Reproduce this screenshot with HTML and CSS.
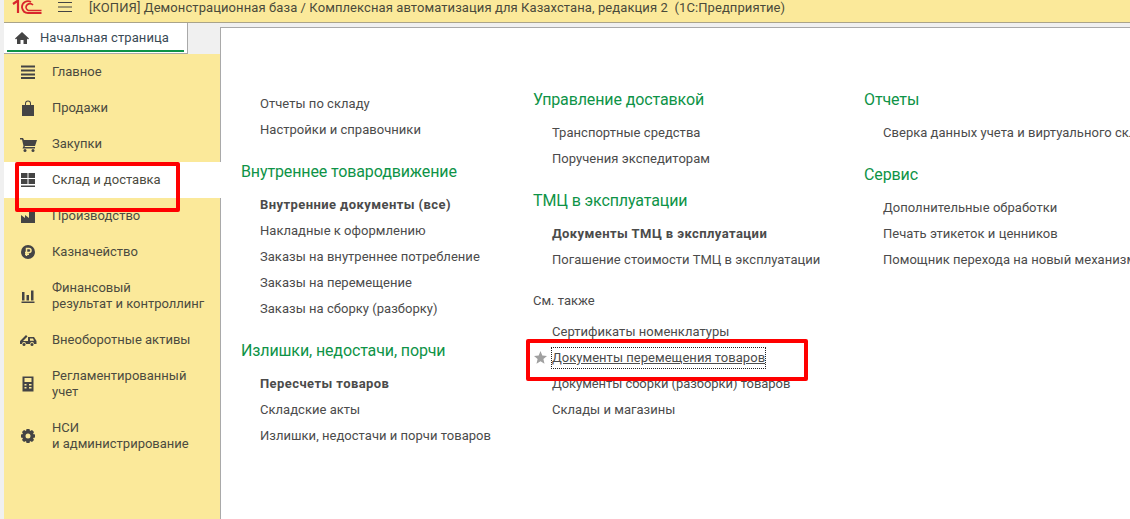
FILE: index.html
```html
<!DOCTYPE html>
<html lang="ru">
<head>
<meta charset="utf-8">
<title>1С:Предприятие</title>
<link rel="stylesheet" href="styles.css">
</head>
<body>
<header class="titlebar">
  <svg class="logo" width="30" height="15" viewBox="0 0 30 15"><g fill="none" stroke="#d8262c"><path stroke-width="2.200" d="M1 4 6 0.500V13"/><path stroke-width="1.800" d="M19 2A6 6 0 0 0 10 7.500Q11 13 16 13H29.500"/><path stroke-width="1.600" d="M21 5A4 4 0 0 0 14 7.500 3.500 3.500 0 0 0 18 10.500H29.500"/></g></svg>
  <svg class="burger" width="16" height="12" viewBox="0 0 16 12"><path d="M1 1.500H15M1 6H15M1 10.500H15" stroke="#444" stroke-width="1.200"/></svg>
  <span class="title">[КОПИЯ] Демонстрационная база / Комплексная автоматизация для Казахстана, редакция 2  (1С:Предприятие)</span>
</header>
<div class="main">
  <aside class="side">
    <div class="tab">
      <svg width="16" height="14" viewBox="0 0 16 14"><path fill="#444" d="M8 1 1 7.500 2 8.500 3 7.500V13H6.500V9H9.500V13H13V7.500L14 8.500 15 7.500Z"/></svg>
      <span class="tab-label">Начальная страница</span>
    </div>
    <nav class="nav">
      <a class="nav-item"><svg class="ico" viewBox="0 0 16 16"><path fill="#444" d="M1 1.500H15V3.500H1ZM1 5.500H15V7.500H1ZM1 9.500H15V11.500H1ZM1 13H15V15H1Z"/></svg><span>Главное</span></a>
      <a class="nav-item"><svg class="ico" viewBox="0 0 16 16"><path fill="#444" fill-rule="evenodd" d="M2 5H5V3.500A3 3 0 0 1 11 3.500V5H14V16H2ZM6 5H10V3.500A2 2 0 0 0 6 3.500Z"/></svg><span>Продажи</span></a>
      <a class="nav-item"><svg class="ico" viewBox="0 0 16 16"><path fill="#444" d="M0 2H3L4 4H17L15 10H5L4.500 11H15V12.500H2.500L3.500 10 2 3.500H0Z"/><circle cx="5" cy="14.500" r="1.500" fill="#444"/><circle cx="13" cy="14.500" r="1.500" fill="#444"/></svg><span>Закупки</span></a>
      <a class="nav-item active"><svg class="ico" viewBox="0 0 16 16"><path fill="#444" d="M1 1H7.500V6H1ZM8.500 1H15V6H8.500ZM1 7H7.500V12H1ZM8.500 7H15V12H8.500ZM1 13.500H15V15H1Z"/></svg><span>Склад и доставка</span></a>
      <a class="nav-item"><svg class="ico" viewBox="0 0 16 16"><path fill="#444" d="M1 15V7L5 10V7L9 10V2H15V15Z"/></svg><span>Производство</span></a>
      <a class="nav-item"><svg class="ico" viewBox="0 0 16 16"><circle cx="8" cy="8" r="7" fill="#444"/><path fill="none" stroke="#fbe99a" stroke-width="1.500" d="M6.500 12V4.500H9A2 2 0 0 1 9 8.500H5M5 10.300H9"/></svg><span>Казначейство</span></a>
      <a class="nav-item tall"><svg class="ico" viewBox="0 0 16 16"><path fill="#444" d="M2 4H4.500V12.500H2ZM6.500 7H9V12.500H6.500ZM11 2.500H13.500V12.500H11ZM1.500 13.500H14.500V15H1.500Z"/></svg><span>Финансовый<br>результат и контроллинг</span></a>
      <a class="nav-item"><svg class="ico" viewBox="0 0 16 16"><path fill="#444" d="M0 12V9L6 3 7.500 4.500 3 9H8V5H14L16.500 9V12H14A2 2 0 0 0 10 12H6A2 2 0 0 0 2 12Z"/><path fill="#fbe99a" d="M10 6.500H13L14 8.800H10Z"/><circle cx="4" cy="12.500" r="1.500" fill="#444"/><circle cx="12" cy="12.500" r="1.500" fill="#444"/></svg><span>Внеоборотные активы</span></a>
      <a class="nav-item tall"><svg class="ico" viewBox="0 0 16 16"><path fill="#444" fill-rule="evenodd" d="M2.500 0.500H13.500V15.500H2.500ZM4.500 2V6H11.500V2ZM4.500 8V9.500H6.500V8ZM9 8V9.500H11.500V8ZM4.500 11V12.500H6.500V11ZM9 11V12.500H11.500V11Z"/></svg><span>Регламентированный<br>учет</span></a>
      <a class="nav-item tall"><svg class="ico" viewBox="0 0 16 16"><path fill="#444" fill-rule="evenodd" d="M6.500 1H9.500L10 3 12 2 14 4 13 6 15 6.500V9.500L13 10 14 12 12 14 10 13 9.500 15H6.500L6 13 4 14 2 12 3 10 1 9.500V6.500L3 6 2 4 4 2 6 3ZM8 5.500A2.500 2.500 0 1 0 8 10.500 2.500 2.500 0 1 0 8 5.500Z"/></svg><span>НСИ<br>и администрирование</span></a>
    </nav>
  </aside>
  <section class="pane">
    <div class="panel">
      <div class="col col-1">
        <a class="link">Отчеты по складу</a>
        <a class="link">Настройки и справочники</a>
        <h2 class="group">Внутреннее товародвижение</h2>
        <a class="link strong">Внутренние документы (все)</a>
        <a class="link">Накладные к оформлению</a>
        <a class="link">Заказы на внутреннее потребление</a>
        <a class="link">Заказы на перемещение</a>
        <a class="link">Заказы на сборку (разборку)</a>
        <h2 class="group">Излишки, недостачи, порчи</h2>
        <a class="link strong">Пересчеты товаров</a>
        <a class="link">Складские акты</a>
        <a class="link">Излишки, недостачи и порчи товаров</a>
      </div>
      <div class="col col-2">
        <h2 class="group first">Управление доставкой</h2>
        <a class="link">Транспортные средства</a>
        <a class="link">Поручения экспедиторам</a>
        <h2 class="group">ТМЦ в эксплуатации</h2>
        <a class="link strong">Документы ТМЦ в эксплуатации</a>
        <a class="link">Погашение стоимости ТМЦ в эксплуатации</a>
        <div class="see">См. также</div>
        <a class="link">Сертификаты номенклатуры</a>
        <a class="link starred">
          <svg class="star" width="13" height="13" viewBox="0 0 13 13"><path fill="#a0a0a0" d="M6.500 0 8.300 4.500 13 4.900 9.400 8 10.500 12.800 6.500 10.200 2.500 12.800 3.600 8 0 4.900 4.700 4.500Z"/></svg>
          <span class="focus">Документы перемещения товаров</span>
        </a>
        <a class="link tight">Документы сборки (разборки) товаров</a>
        <a class="link">Склады и магазины</a>
      </div>
      <div class="col col-3">
        <h2 class="group first">Отчеты</h2>
        <a class="link">Сверка данных учета и виртуального склада</a>
        <h2 class="group">Сервис</h2>
        <a class="link">Дополнительные обработки</a>
        <a class="link">Печать этикеток и ценников</a>
        <a class="link">Помощник перехода на новый механизм</a>
      </div>
    </div>
  </section>
</div>
<div class="mark mark-nav"></div>
<div class="mark mark-doc"></div>
</body>
</html>
```
FILE: styles.css
```css
* { box-sizing: border-box; }
html, body { margin: 0; height: 100%; overflow: hidden; }
body {
  position: relative;
  width: 1130px;
  height: 519px;
  background: #f0f0f0;
  font-family: Roboto, "Liberation Sans", sans-serif;
  font-size: 13px;
  color: #4b4b4b;
}
a { display: block; }
.titlebar {
  height: 23px;
  margin-left: 4px;
  padding: 0 0 8px 8px;
  display: flex;
  align-items: center;
  background: #fbe99a;
  border-bottom: 1px solid #a9a38a;
}
.logo { flex: none; }
.burger { flex: none; margin-left: 15px; }
.title { margin-left: 16px; white-space: pre; color: #4a4a3a; letter-spacing: 0.09px; }
.main { display: flex; height: 496px; padding-left: 4px; }
.side { width: 217px; flex: none; display: flex; flex-direction: column; }
.tab {
  width: 184px;
  height: 31px;
  background: #fff;
  border-right: 1px solid #a9a9a9;
  border-bottom: 1px solid #a9a9a9;
  display: flex;
  align-items: center;
  padding: 0 0 1px 10px;
  position: relative;
  color: #3a4a55;
}
.tab::after {
  content: "";
  position: absolute;
  left: 3px; right: 3px; bottom: 1px;
  height: 2px;
  background: #0e9347;
}
.tab-label { margin-left: 10px; letter-spacing: 0.1px; }
.nav {
  flex: 1;
  background: #fbe99a;
  border-right: 1px solid #a8a26e;
}
.nav-item {
  height: 36px;
  padding-left: 16px;
  display: flex;
  align-items: center;
  line-height: 16px;
  color: #4b4b40;
}
.nav-item.tall { height: 52px; }
.nav-item.active { background: #fff; margin-right: -1px; position: relative; z-index: 1; }
.ico { width: 16px; height: 16px; flex: none; margin-right: 16px; overflow: visible; }
.pane { flex: 1; padding-top: 4px; min-width: 0; }
.panel {
  height: 100%;
  margin-left: -1px;
  background: #fff;
  border-top: 1px solid #a9a9a9;
  border-left: 1px solid #a9a9a9;
  display: flex;
  padding-top: 59px;
  overflow: hidden;
  white-space: nowrap;
}
.col { flex: none; display: flex; flex-direction: column; }
.col-1 { width: 312px; padding: 4px 0 0 20px; }
.col-2 { width: 331px; }
.col-3 { flex: 1; min-width: 0; }
.link { height: 26px; line-height: 26px; padding-left: 19px; color: #4b4b4b; letter-spacing: 0.03px; }
.link.strong { font-weight: 700; letter-spacing: 0.42px; }
.link.tight { letter-spacing: -0.05px; }
.group {
  margin: 0;
  padding-top: 16px;
  height: 49px;
  line-height: 26px;
  font-weight: 400;
  font-size: 16px;
  letter-spacing: -0.12px;
  color: #0e9347;
}
.group.first { height: 33px; padding-top: 0; }
.see { height: 46px; padding-top: 15px; line-height: 26px; }
.starred { position: relative; display: flex; align-items: center; }
.star { position: absolute; left: 1px; top: 6px; }
.focus { text-decoration: underline; outline: 1px dotted #222; display: block; line-height: 20px; }
.mark { position: absolute; z-index: 2; border: 4px solid #f00; border-radius: 2px; background: transparent; }
.mark-nav { left: 15px; top: 162px; width: 165px; height: 50px; }
.mark-doc { left: 526px; top: 339px; width: 282px; height: 42px; }
```
